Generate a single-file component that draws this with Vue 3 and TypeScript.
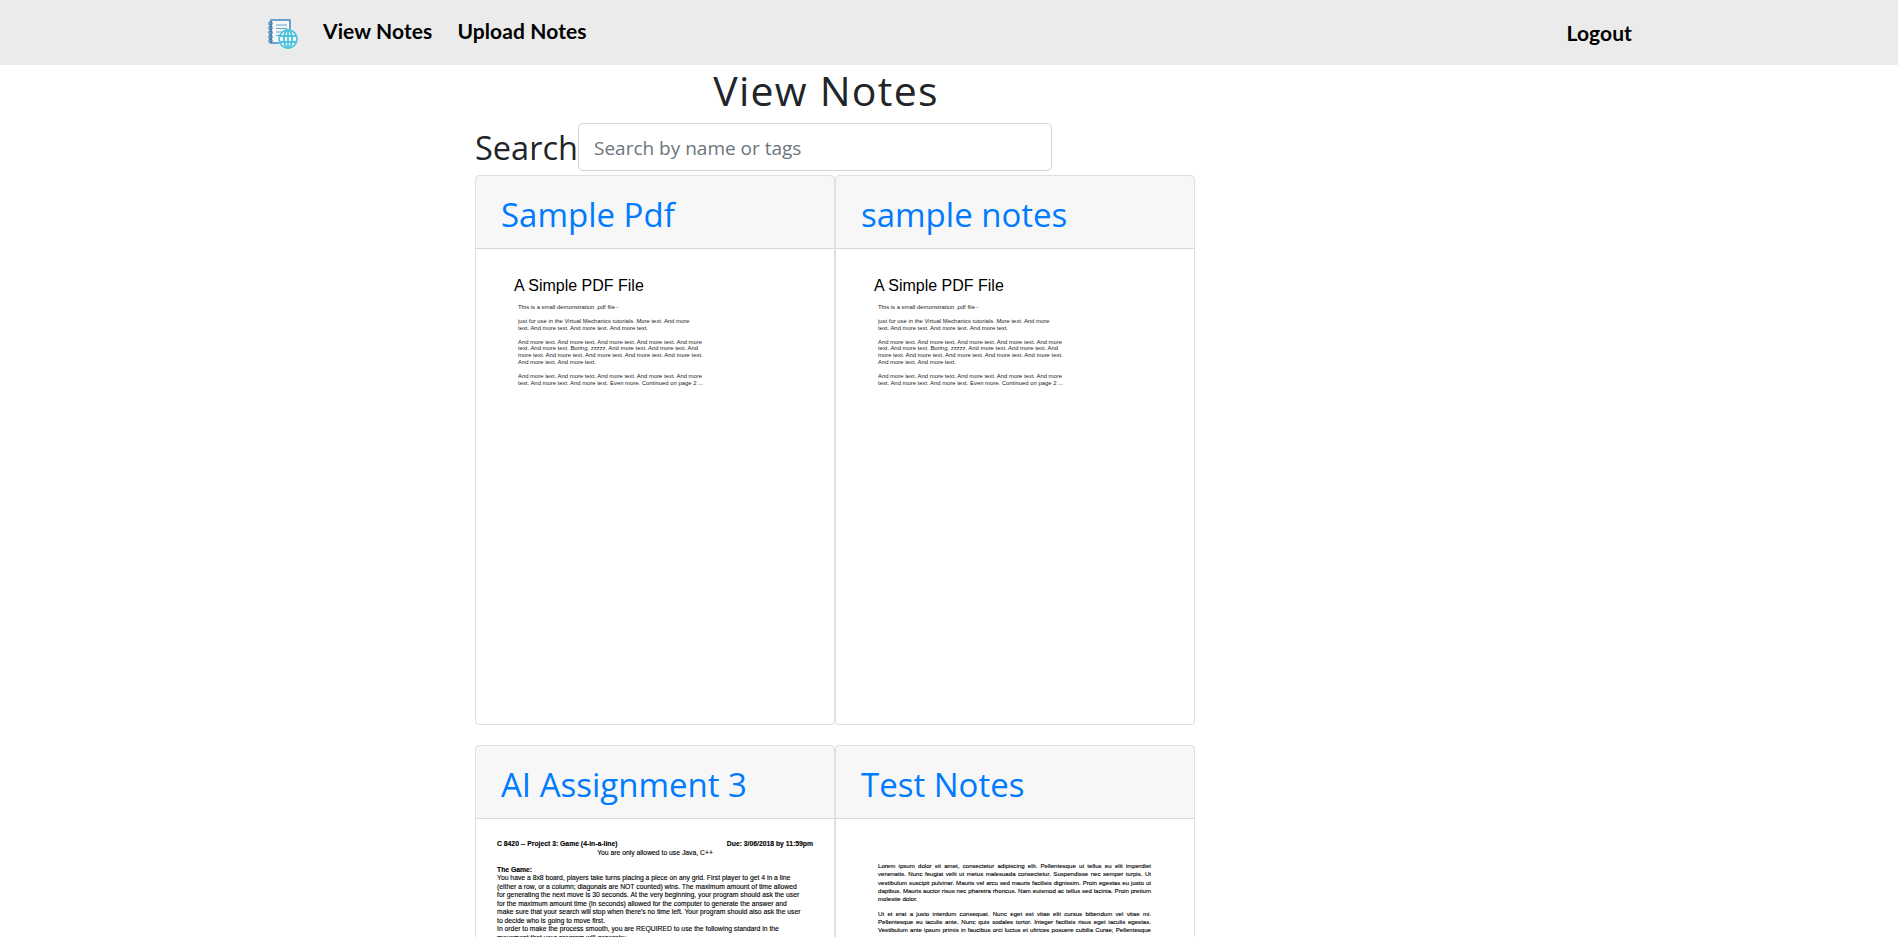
<script setup lang="ts">
type Line = { text: string; bold?: boolean; center?: boolean; gap?: boolean; due?: string };

const simplePdf: Line[] = [
  { text: 'This is a small demonstration .pdf file -' },
  { text: 'just for use in the Virtual Mechanics tutorials. More text. And more', gap: true },
  { text: 'text. And more text. And more text. And more text.' },
  { text: 'And more text. And more text. And more text. And more text. And more', gap: true },
  { text: 'text. And more text. Boring, zzzzz. And more text. And more text. And' },
  { text: 'more text. And more text. And more text. And more text. And more text.' },
  { text: 'And more text. And more text.' },
  { text: 'And more text. And more text. And more text. And more text. And more', gap: true },
  { text: 'text. And more text. And more text. Even more. Continued on page 2 ...' },
];

const assignment: Line[] = [
  { text: 'C 8420 -- Project 3: Game (4-in-a-line)', bold: true, due: 'Due: 3/06/2018 by 11:59pm' },
  { text: 'You are only allowed to use Java, C++', center: true },
  { text: 'The Game:', bold: true, gap: true },
  { text: 'You have a 8x8 board, players take turns placing a piece on any grid. First player to get 4 in a line' },
  { text: '(either a row, or a column; diagonals are NOT counted) wins. The maximum amount of time allowed' },
  { text: 'for generating the next move is 30 seconds. At the very beginning, your program should ask the user' },
  { text: 'for the maximum amount time (in seconds) allowed for the computer to generate the answer and' },
  { text: "make sure that your search will stop when there's no time left. Your program should also ask the user" },
  { text: 'to decide who is going to move first.' },
  { text: 'In order to make the process smooth, you are REQUIRED to use the following standard in the' },
  { text: 'movement that your program will generate:' },
];

const lorem = [
  'Lorem ipsum dolor sit amet, consectetur adipiscing elit. Pellentesque ut tellus eu elit imperdiet venenatis. Nunc feugiat velit ut metus malesuada consectetur. Suspendisse nec semper turpis. Ut vestibulum suscipit pulvinar. Mauris vel arcu sed mauris facilisis dignissim. Proin egestas eu justo ut dapibus. Mauris auctor risus nec pharetra rhoncus. Nam euismod ac tellus sed lacinia. Proin pretium molestie dolor.',
  'Ut et erat a justo interdum consequat. Nunc eget est vitae elit cursus bibendum vel vitae mi. Pellentesque eu iaculis ante. Nunc quis sodales tortor. Integer facilisis risus eget iaculis egestas. Vestibulum ante ipsum primis in faucibus orci luctus et ultrices posuere cubilia Curae; Pellentesque habitant morbi tristique senectus et netus et malesuada fames ac turpis egestas.',
];
</script>

<template>
  <div class="page">
    <nav class="navbar">
      <svg class="logo" viewBox="0 0 32 32" width="32" height="32" aria-hidden="true">
        <rect x="4" y="2" width="19" height="23" fill="#f4f6f8" stroke="#3a7fb5" stroke-width="1.4" />
        <g fill="none" stroke="#3a7fb5" stroke-width="1.3">
          <circle cx="3.5" cy="5.5" r="1.6" />
          <circle cx="3.5" cy="10" r="1.6" />
          <circle cx="3.5" cy="14.5" r="1.6" />
          <circle cx="3.5" cy="19" r="1.6" />
          <circle cx="3.5" cy="23" r="1.6" />
        </g>
        <path d="M9 7h11M9 10.5h11M9 14h8M9 17.5h5" stroke="#5aa5d2" stroke-width="1.2" fill="none" />
        <circle cx="21" cy="21" r="10" fill="#eef8fb" />
        <g fill="none" stroke="#4fc3dc" stroke-width="1.8">
          <circle cx="21" cy="21" r="9" />
          <ellipse cx="21" cy="21" rx="4" ry="9" />
          <path d="M21 12v18M12.5 18h17M12.5 24h17" />
        </g>
      </svg>
      <a class="nav-link first">View Notes</a>
      <a class="nav-link">Upload Notes</a>
      <a class="nav-link logout">Logout</a>
    </nav>

    <main class="content">
      <h1 class="title">View Notes</h1>
      <div class="search">
        <label class="search-label">Search</label>
        <input class="search-input" type="text" placeholder="Search by name or tags" />
      </div>

      <div class="cards">
        <section class="card">
          <header class="card-header"><a>Sample Pdf</a></header>
          <div class="card-body">
            <div class="pdf">
              <div class="pdf-title">A Simple PDF File</div>
              <div v-for="(l, i) in simplePdf" :key="i" class="pdf-line" :class="{ gap: l.gap }">{{ l.text }}</div>
            </div>
          </div>
        </section>
        <section class="card">
          <header class="card-header"><a>sample notes</a></header>
          <div class="card-body">
            <div class="pdf">
              <div class="pdf-title">A Simple PDF File</div>
              <div v-for="(l, i) in simplePdf" :key="i" class="pdf-line" :class="{ gap: l.gap }">{{ l.text }}</div>
            </div>
          </div>
        </section>
        <section class="card">
          <header class="card-header"><a>AI Assignment 3</a></header>
          <div class="card-body">
            <div class="assignment">
              <div
                v-for="(l, i) in assignment"
                :key="i"
                class="as-line"
                :class="{ bold: l.bold, center: l.center, gap: l.gap }"
              >
                <span>{{ l.text }}</span><span v-if="l.due">{{ l.due }}</span>
              </div>
            </div>
          </div>
        </section>
        <section class="card">
          <header class="card-header"><a>Test Notes</a></header>
          <div class="card-body">
            <div class="lorem">
              <p v-for="(p, i) in lorem" :key="i">{{ p }}</p>
            </div>
          </div>
        </section>
      </div>
    </main>
  </div>
</template>

<style>
html,
body {
  margin: 0;
  overflow: hidden;
}
</style>

<style scoped>
.page {
  height: 937px;
  overflow: hidden;
  background: #fff;
  color: #212529;
  font-family: "Open Sans", "Noto Sans", sans-serif;
}

.navbar {
  height: 65px;
  background: #ebebeb;
  display: flex;
  align-items: center;
  padding-left: 267px;
  padding-right: 266px;
}

.logo {
  flex: none;
  margin-top: 2px;
}

.nav-link {
  font-family: Lato, "Liberation Sans", sans-serif;
  font-weight: 700;
  font-size: 21px;
  letter-spacing: 0.1px;
  color: #000;
  margin-left: 25px;
  margin-bottom: 4px;
}

.nav-link.first {
  margin-left: 24px;
}

.logout {
  margin-left: auto;
  margin-bottom: 0;
}

.content {
  margin-left: 475px;
  width: 702px;
}

.title {
  margin: 0;
  height: 56px;
  font-size: 41px;
  font-weight: 400;
  letter-spacing: 1.25px;
  line-height: 50px;
  text-align: center;
}

.search {
  display: flex;
  align-items: center;
  height: 54px;
}

.search-label {
  width: 103px;
  font-size: 32.5px;
  line-height: 46px;
  white-space: nowrap;
}

.search-input {
  box-sizing: border-box;
  width: 474px;
  height: 48px;
  margin-bottom: 2px;
  padding: 2px 15px 0;
  border: 1px solid #ced4da;
  border-radius: 5px;
  font-family: inherit;
  font-size: 19px;
  color: #495057;
  outline: none;
}

.search-input::placeholder {
  color: #6c757d;
  opacity: 1;
}

.cards {
  display: grid;
  grid-template-columns: 360px 360px;
  grid-auto-rows: 550px;
  row-gap: 20px;
  width: 720px;
}

.card {
  box-sizing: border-box;
  border: 1px solid rgba(0, 0, 0, 0.125);
  border-radius: 4px;
  display: flex;
  flex-direction: column;
  overflow: hidden;
}

.card-header {
  box-sizing: border-box;
  height: 73px;
  flex: none;
  padding-left: 25px;
  background: rgba(0, 0, 0, 0.03);
  border-bottom: 1px solid rgba(0, 0, 0, 0.125);
  font-size: 33px;
  line-height: 78px;
  color: #007bff;
}

.card-body {
  flex: 1;
  position: relative;
  font-family: "Liberation Sans", Arial, sans-serif;
  color: #000;
}

.pdf {
  padding: 27px 0 0 38px;
}

.pdf-title {
  font-size: 16px;
  line-height: 20px;
  margin-bottom: 8px;
}

.pdf-line {
  font-size: 5.9px;
  line-height: 6.9px;
  margin-left: 4px;
  white-space: nowrap;
  color: #222;
}

.pdf-line.gap {
  margin-top: 6.9px;
}

.assignment {
  padding: 21px 0 0 21px;
  width: 316px;
  -webkit-text-stroke: 0.12px #000;
}

.as-line {
  font-size: 6.8px;
  line-height: 8.5px;
  white-space: nowrap;
  display: flex;
  justify-content: space-between;
}

.as-line.bold {
  font-weight: 700;
}

.as-line.center {
  justify-content: center;
}

.as-line.gap {
  margin-top: 8.5px;
}

.lorem {
  padding: 43px 0 0 42px;
  width: 273px;
  -webkit-text-stroke: 0.12px #000;
}

.lorem p {
  margin: 0 0 6.4px;
  font-size: 6.1px;
  line-height: 8.3px;
  text-align: justify;
}
</style>
